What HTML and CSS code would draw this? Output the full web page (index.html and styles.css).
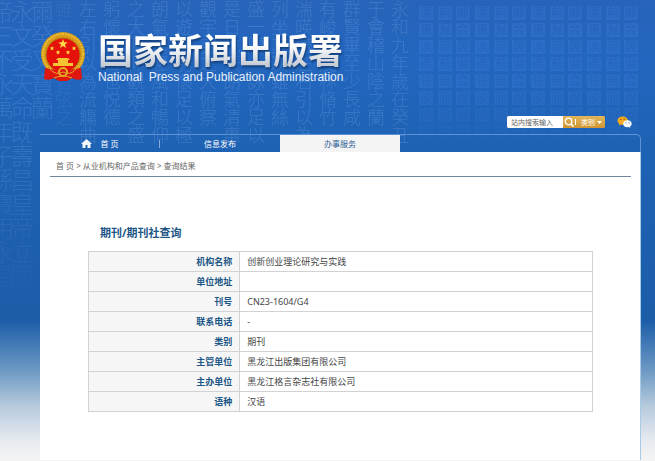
FILE: index.html
```html
<!DOCTYPE html>
<html lang="zh-CN">
<head>
<meta charset="utf-8">
<title>国家新闻出版署</title>
<link rel="stylesheet" href="styles.css">
</head>
<body>
<div class="backdrop" aria-hidden="true">
  <div class="script">
    <span class="seal">帝三不永萬年子孫寶用永昌</span>
    <span class="seal">永文受天命既壽昌皇帝立國</span>
    <span class="seal">爾癸又寶蘭</span>
    <span class="faint">雖無絲竹管弦之</span>
    <span>左右引以為流觴曲</span>
    <span>躬懷是日也悦德</span>
    <span>之大俯仰觀類之盛</span>
    <span>朗氣清惠風和暢仰</span>
    <span>以遊目騁懷足以極</span>
    <span>觀宇宙之大俯察</span>
    <span>是日也天朗氣清惠</span>
    <span>盛一觴一詠亦足以</span>
    <span>列坐其次雖無絲</span>
    <span>湍暎帶左右引以為</span>
    <span>有峻領茂林脩竹</span>
    <span>群賢畢至少長咸</span>
    <span>于會稽山陰之蘭</span>
    <span>永和九年歲在癸丑</span>
  </div>
  <svg class="tiles" width="230" height="150">
    <defs>
      <pattern id="tile" width="56" height="51" patternUnits="userSpaceOnUse">
        <g fill="#3d7fdd" fill-opacity=".35">
          <path d="M2 1h14v14H2zM21 1h14v14H21zM39 1h14v14H39zM2 18h14v14H2zM21 18h14v14H21zM39 18h14v14H39zM2 35h14v14H2zM21 35h14v14H21zM39 35h14v14H39z"/>
        </g>
        <g class="tile-text">
          <text x="3" y="12">德</text><text x="22" y="12">前</text><text x="40" y="12">顯</text>
          <text x="3" y="29">張</text><text x="22" y="29">見</text><text x="40" y="29">合</text>
          <text x="3" y="46">淡</text><text x="22" y="46">而</text><text x="40" y="46">醒</text>
        </g>
      </pattern>
      <linearGradient id="fade" x1="0" y1="0" x2="0" y2="1">
        <stop offset=".55" stop-color="#fff"/><stop offset=".95" stop-color="#fff" stop-opacity="0"/>
      </linearGradient>
      <mask id="fade-mask"><rect width="230" height="150" fill="url(#fade)"/></mask>
    </defs>
    <rect width="222" height="150" fill="url(#tile)" mask="url(#fade-mask)"/>
  </svg>
</div>

<div class="page">
  <header class="masthead">
    <svg class="emblem" viewBox="0 0 46 50" role="img" aria-label="国徽">
      <path d="M6 34 5 47q4 2 9-1l5 3h8l5-3q5 3 9 1l-1-13z" fill="#d9150f"/>
      <circle cx="23" cy="22" r="22" fill="#d79b19"/>
      <circle cx="23" cy="22" r="20" fill="none" stroke="#e9bf38" stroke-width="2" stroke-dasharray="2 1"/>
      <circle cx="23" cy="23" r="17" fill="#e5120c" stroke="#b77911"/>
      <path d="m23 7 1.200 3.300 3.600.1-2.800 2.200 1 3.400-3-2-3 2 1-3.400-2.800-2.200 3.600-.1z" fill="#ffda45"/>
      <path id="star" d="m12 14 .6 1.500 1.700.1-1.300 1.100.4 1.600-1.400-.9-1.400.9.4-1.600-1.300-1.100 1.700-.1z" fill="#ffda45"/>
      <use href="#star" x="6" y="4"/><use href="#star" x="16" y="4"/><use href="#star" x="22"/>
      <path d="M18 26h10l2 2H16zM18 28h10v3H18zM13 31h20v3H13z" fill="#f6c431"/>
      <path d="M5 36q18 4 36 0l1 11q-5 1-9-2l-5 3h-10l-5-3q-4 3-9 2z" fill="#e0170f"/>
      <circle cx="23" cy="40" r="4" fill="#d9150f" stroke="#e7ae25" stroke-width="2"/>
      <path d="M10 37q6 7 13 3 7 4 13-3M14 46q9-4 18 0" fill="none" stroke="#e5a52b"/>
    </svg>
    <div class="brand">
      <h1>国家新闻出版署</h1>
      <p>National&nbsp; Press and Publication Administration</p>
    </div>
  </header>

  <div class="tools">
    <form class="search">
      <input type="text" placeholder="站内搜索输入" aria-label="站内搜索输入">
      <button type="button" class="go" aria-label="搜索">
        <svg width="10" height="10" viewBox="0 0 10 10" fill="none" stroke="#fff"><circle cx="4.500" cy="4.500" r="3.300" stroke-width="1.300"/><path d="m7 7 2.500 2.500" stroke-width="1.600"/></svg>
      </button>
      <button type="button" class="kind">类别
        <svg width="5" height="3" viewBox="0 0 5 3"><path d="M0 0h5L2.500 3z" fill="#fff"/></svg>
      </button>
    </form>
    <a class="wechat" href="#" aria-label="微信">
      <svg width="16" height="12" viewBox="0 0 16 12">
        <path d="M5.500.5C2.500.5.500 2.300.500 4.600c0 1.300.7 2.400 1.700 3.200L2 9.500l2-.9c3.800.8 6.800-1.200 6.800-4 0-2.400-2.200-4.100-5.300-4.100z" fill="#f5a91c"/>
        <path d="M10.600 4.200c-2.600 0-4.500 1.500-4.500 3.500 0 2.300 2.500 4 5.300 3.300l1.900.8-.3-1.400c1-.7 1.700-1.600 1.700-2.700 0-2-1.700-3.500-4.100-3.500z" fill="#f4f7fb"/>
        <g fill="#875b12"><circle cx="3.800" cy="3.400" r=".7"/><circle cx="7.300" cy="3.200" r=".7"/></g>
        <g fill="#52779c"><circle cx="9" cy="6.800" r=".6"/><circle cx="12" cy="6.800" r=".6"/></g>
      </svg>
    </a>
  </div>

  <nav class="nav">
    <a class="home" href="#">
      <svg width="11" height="9" viewBox="0 0 11 9"><path d="M5.500 0 11 5H9.500v4h-3V6h-2v3h-3V5H0z" fill="#f2f6fb"/></svg>
      首 页
    </a>
    <a href="#">信息发布</a>
    <a class="active" href="#" aria-current="page">办事服务</a>
  </nav>

  <main class="panel">
    <div class="crumbs"><a href="#">首 页</a> &gt; <a href="#">从业机构和产品查询</a> &gt; 查询结果</div>
    <section class="result">
      <h2>期刊/期刊社查询</h2>
      <table>
        <tr><th scope="row">机构名称</th><td>创新创业理论研究与实践</td></tr>
        <tr><th scope="row">单位地址</th><td></td></tr>
        <tr><th scope="row">刊号</th><td>CN23-1604/G4</td></tr>
        <tr><th scope="row">联系电话</th><td>-</td></tr>
        <tr><th scope="row">类别</th><td>期刊</td></tr>
        <tr><th scope="row">主管单位</th><td>黑龙江出版集团有限公司</td></tr>
        <tr><th scope="row">主办单位</th><td>黑龙江格言杂志社有限公司</td></tr>
        <tr><th scope="row">语种</th><td>汉语</td></tr>
      </table>
    </section>
  </main>
</div>
</body>
</html>
```

FILE: styles.css
```css
* {
  box-sizing: border-box;
}

body {
  margin: 0;
  min-height: 100vh;
  position: relative;
  background: linear-gradient(#2763b9 0, #2266bf 60px, #1e62b4 150px, #1c5da8 320px, #6c98c3 370px, #b4c9dc 405px, #e6eaf0 440px, #f3f3f3 458px) #f3f3f3;
  font-family: "Noto Sans", "Noto Sans CJK SC", sans-serif;
  font-size: 8px;
  color: #444;
}

a {
  color: inherit;
  text-decoration: none;
}

/* Faded calligraphy and seal tiles behind the page */
.backdrop {
  position: absolute;
  inset: 0;
  overflow: hidden;
}

.script {
  display: flex;
  position: absolute;
  top: 0;
  left: -8px;
  font-family: "Noto Sans CJK TC", sans-serif;
  font-weight: 300;
  font-size: 18px;
  line-height: 24px;
  color: #8db8ee;
  opacity: 0.24;
}

.script span {
  writing-mode: vertical-rl;
  width: 24px;
  white-space: nowrap;
}

.script .seal {
  width: 20px;
  font-size: 24px;
  line-height: 20px;
  opacity: 0.8;
  mask-image: linear-gradient(#000 150px, transparent 320px);
}

.script .faint {
  opacity: 0.5;
}

.tiles {
  position: absolute;
  top: 5px;
  right: 8px;
}

.tile-text {
  font-family: "Noto Sans CJK TC", sans-serif;
  font-size: 12px;
  fill: #1a56ab;
  fill-opacity: 0.45;
}

.page {
  position: relative;
  display: flex;
  flex-direction: column;
  min-height: 100vh;
  padding: 32px 14px 1px 40px;
}

.masthead {
  display: flex;
  gap: 12px;
}

.emblem {
  width: 46px;
  height: 50px;
}

.brand h1 {
  margin: 0;
  font-size: 35px;
  line-height: 38px;
  font-weight: 700;
  background: linear-gradient(#fff 35%, #c3c9d2 90%);
  background-clip: text;
  color: transparent;
  filter: drop-shadow(1px 2px 1px #123f7b);
}

.brand p {
  margin: 0;
  font-family: "Liberation Sans", sans-serif;
  font-size: 12px;
  line-height: 14px;
  color: #e8f0fa;
}

.tools {
  display: flex;
  justify-content: flex-end;
  align-items: center;
  gap: 12px;
  margin-top: 32px;
  padding-right: 8px;
}

.search {
  display: flex;
  height: 12px;
  border-radius: 2px;
  overflow: hidden;
  background: #d9a441;
}

.search input {
  width: 56px;
  padding: 0 4px;
  border: 0;
  background: #fff;
  font: inherit;
  font-size: 7px;
}

.search input::placeholder {
  color: #666;
}

.search button {
  display: flex;
  align-items: center;
  justify-content: center;
  gap: 2px;
  padding: 0;
  border: 0;
  background: linear-gradient(#e2b65a, #cf9632);
  color: #fff;
  font: inherit;
  font-size: 7px;
}

.search .go {
  width: 12px;
}

.search .kind {
  width: 30px;
  padding-left: 3px;
  background: linear-gradient(#fff, #fff) 0 50% / 1px 6px no-repeat, linear-gradient(#e2b65a, #cf9632);
}

.wechat {
  display: flex;
}

.nav {
  display: flex;
  height: 18px;
  margin-top: 6px;
  border: solid #5c93d3;
  border-width: 1px 1px 0 0;
  border-radius: 0 5px 0 0;
  color: #fff;
}

.nav a {
  flex: 0 0 20%;
  display: flex;
  align-items: center;
  justify-content: center;
}

.nav .home {
  gap: 8px;
  background: linear-gradient(#84acd9, #84acd9) 100% 50% / 1px 8px no-repeat;
}

.nav .active {
  background: #f5f4f4;
  color: #2f5e96;
}

.panel {
  flex: 1;
  padding: 0 9px 0 10px;
  background: #fff;
  border-right: 1px solid #a9cbe5;
}

.crumbs {
  padding: 8px 6px 4px;
  border-bottom: 1px solid #71879d;
  line-height: 12px;
  color: #666;
}

.result {
  padding: 48px 38px;
}

.result h2 {
  margin: 0 0 10px;
  padding-left: 12px;
  font-size: 11px;
  line-height: 16px;
  color: #1c5687;
}

table {
  width: 100%;
  border-collapse: collapse;
  table-layout: fixed;
  font-size: 9px;
  line-height: 19px;
}

th,
td {
  height: 20px;
  padding: 0 7px;
  border: 1px solid #d2d2d2;
}

th {
  width: 30%;
  background: #f6f6f6;
  text-align: right;
  color: #1c5687;
}
```
